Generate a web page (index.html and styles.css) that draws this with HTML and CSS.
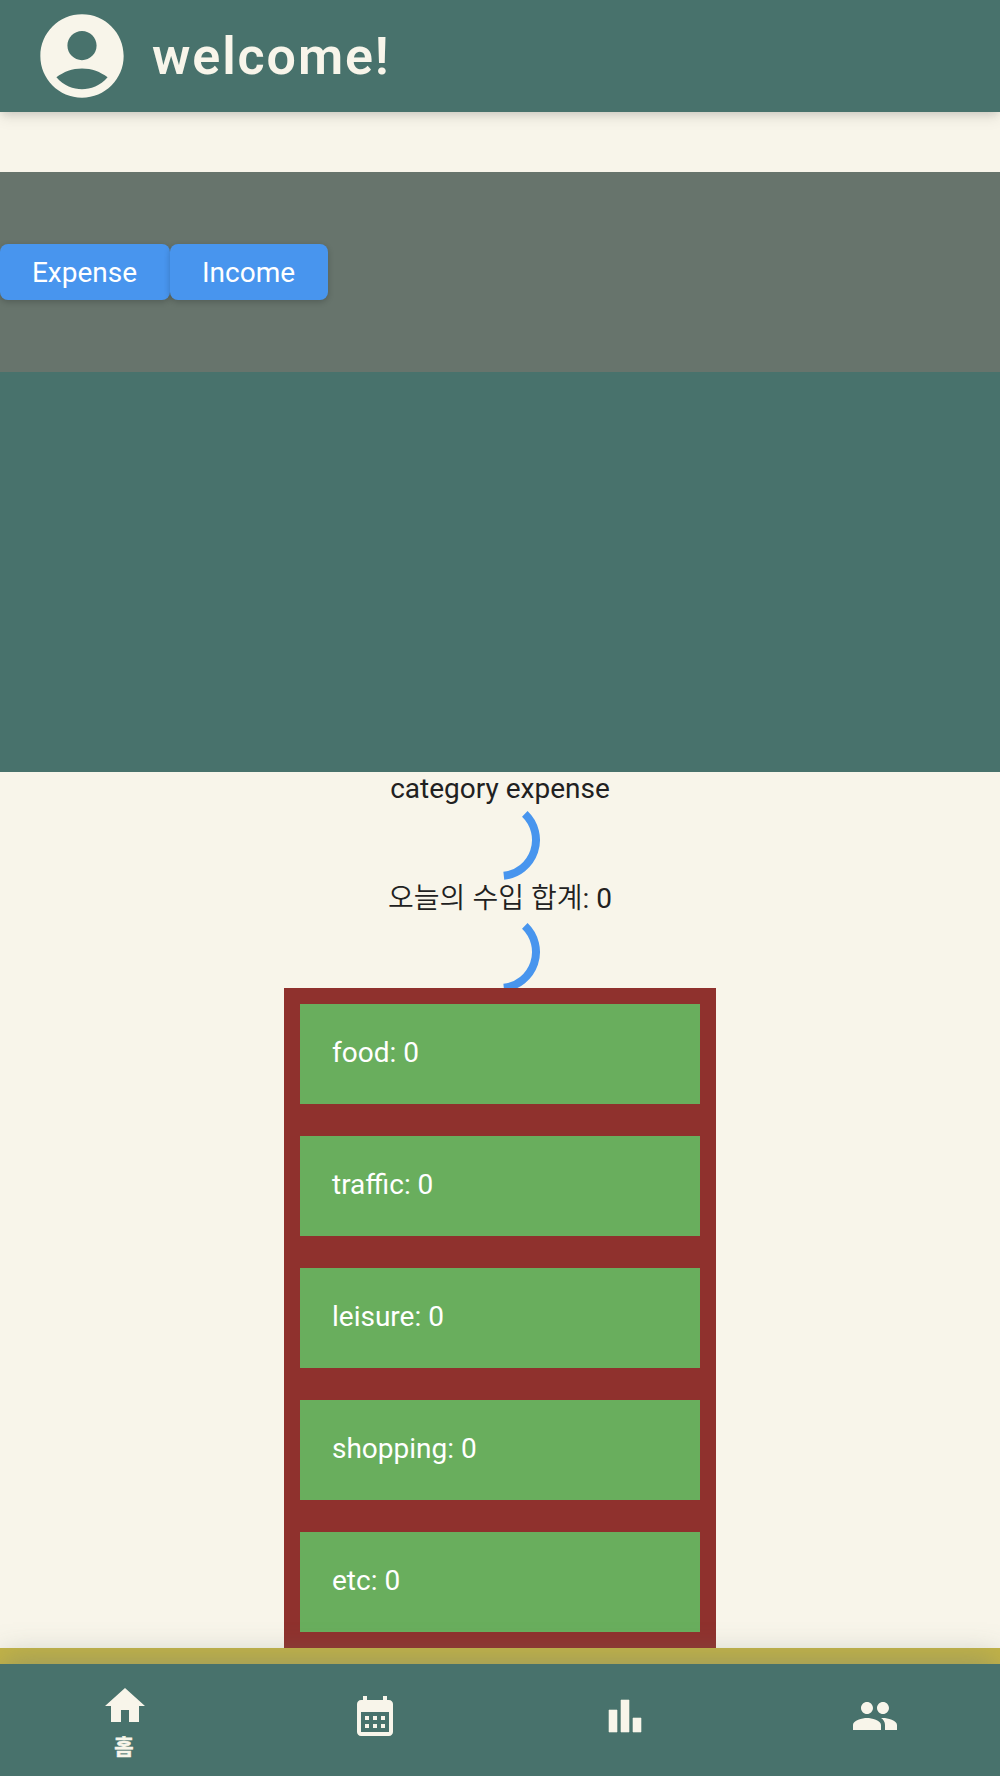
FILE: index.html
```html
<!DOCTYPE html>
<html lang="ko">
<head>
<meta charset="utf-8">
<title>welcome!</title>
<link rel="stylesheet" href="styles.css">
</head>
<body>
<div class="app">
  <header class="app-bar">
    <svg class="avatar" viewBox="0 0 24 24"><path fill-rule="evenodd" d="M12 2C6.48 2 2 6.48 2 12s4.48 10 10 10 10-4.48 10-10S17.52 2 12 2zM12 6c1.93 0 3.5 1.57 3.5 3.5S13.93 13 12 13s-3.5-1.57-3.5-3.5S10.07 6 12 6zM12 20c-2.03 0-4.43-.82-6.14-2.88C7.55 15.8 9.68 15 12 15s4.45.8 6.14 2.12C16.43 19.18 14.03 20 12 20z"/></svg>
    <h1 class="title">welcome!</h1>
  </header>
  <main class="content">
    <section class="actions">
      <button class="button button-expense">Expense</button>
      <button class="button button-income">Income</button>
    </section>
    <section class="panel"></section>
    <section class="summary">
      <p class="label">category expense</p>
      <svg class="spinner" viewBox="-36 -36 72 72"><path d="M24.8 -26.1A36 36 0 0 1 3.8 35.8"/></svg>
      <p class="label label-korean"><span class="light">오늘의 수입 합계</span>: 0</p>
      <svg class="spinner" viewBox="-36 -36 72 72"><path d="M24.8 -26.1A36 36 0 0 1 3.8 35.8"/></svg>
    </section>
    <ul class="categories">
      <li class="category">food: 0</li>
      <li class="category">traffic: 0</li>
      <li class="category">leisure: 0</li>
      <li class="category">shopping: 0</li>
      <li class="category">etc: 0</li>
    </ul>
    <div class="strip"></div>
  </main>
  <nav class="bottom-nav">
    <a class="nav-item nav-active">
      <svg class="icon" viewBox="0 0 24 24"><path d="M10 20v-6h4v6h5v-8h3L12 3 2 12h3v8z"/></svg>
      <span class="nav-label">홈</span>
    </a>
    <a class="nav-item">
      <svg class="icon" viewBox="0 0 24 24"><path d="M19 4h-1V2h-2v2H8V2H6v2H5c-1.11 0-1.99.9-1.99 2L3 20c0 1.1.89 2 2 2h14c1.1 0 2-.9 2-2V6c0-1.1-.9-2-2-2zm0 16H5V10h14v10zM9 14H7v-2h2v2zm4 0h-2v-2h2v2zm4 0h-2v-2h2v2zm-8 4H7v-2h2v2zm4 0h-2v-2h2v2zm4 0h-2v-2h2v2z"/></svg>
    </a>
    <a class="nav-item">
      <svg class="icon icon-chart" viewBox="0 0 24 24"><path d="M4 9h4v11H4zM16 13h4v7h-4zM10 4h4v16h-4z"/></svg>
    </a>
    <a class="nav-item">
      <svg class="icon" viewBox="0 0 24 24"><path d="M16 11c1.66 0 2.99-1.34 2.99-3S17.66 5 16 5s-3 1.34-3 3 1.34 3 3 3zm-8 0c1.66 0 2.99-1.34 2.99-3S9.66 5 8 5 5 6.34 5 8s1.34 3 3 3zm0 2c-2.33 0-7 1.17-7 3.5V19h14v-2.5c0-2.33-4.67-3.5-7-3.5zm8 0c-.29 0-.62.02-.97.05 1.16.84 1.97 1.97 1.97 3.45V19h6v-2.5c0-2.33-4.67-3.5-7-3.5z"/></svg>
    </a>
  </nav>
</div>
</body>
</html>
```
FILE: styles.css
```css
* {
  box-sizing: border-box;
}

body {
  margin: 0;
  background: #f8f5ea;
  color: #212121;
  font-family: Roboto, "Noto Sans CJK KR", sans-serif;
  font-size: 28px;
}

.app {
  display: flex;
  flex-direction: column;
  height: 1776px;
  overflow: hidden;
}

.app-bar {
  display: flex;
  flex: none;
  align-items: center;
  gap: 20px;
  height: 112px;
  padding-left: 32px;
  background: #48726c;
  color: #f8f5ea;
  box-shadow: 0 4px 8px -2px rgba(0, 0, 0, .12), 0 6px 14px rgba(0, 0, 0, .08);
  z-index: 1;
}

.avatar {
  width: 100px;
  height: 100px;
  fill: currentColor;
}

.title {
  margin: 0;
  padding-top: 2px;
  font-size: 52px;
  font-weight: 600;
  letter-spacing: 1.9px;
  line-height: 60px;
}

.content {
  flex: 1;
  padding-top: 60px;
}

.actions {
  display: flex;
  align-items: center;
  height: 200px;
  background: #67746c;
}

.button {
  height: 56px;
  padding: 0 1px 0 0;
  border: 0;
  border-radius: 8px;
  background: #4895ee;
  color: #fff;
  font: inherit;
  box-shadow: 0 2px 6px rgba(0, 0, 0, .2);
}

.button-expense {
  width: 170px;
}

.button-income {
  width: 158px;
}

.panel {
  height: 400px;
  background: #48726c;
}

.summary {
  display: flex;
  flex-direction: column;
  align-items: center;
  height: 216px;
}

.label {
  height: 32px;
  margin: 0;
  line-height: 34px;
}

.label-korean {
  height: 40px;
  line-height: 45px;
}

.light {
  font-family: "Noto Sans CJK KR", sans-serif;
  font-weight: 350;
  line-height: 1;
  word-spacing: -.8px;
}

.spinner {
  flex: none;
  width: 72px;
  height: 72px;
  overflow: visible;
  fill: none;
  stroke: #4895ee;
  stroke-width: 8;
}

.categories {
  position: relative;
  display: flex;
  flex-direction: column;
  gap: 32px;
  width: 432px;
  margin: 0 auto;
  padding: 16px;
  background: #8f312d;
  list-style: none;
}

.category {
  height: 100px;
  padding: 32px;
  background: #69ae5d;
  color: #fff;
  line-height: 33px;
}

.strip {
  height: 16px;
  background: #c4b445;
}

.bottom-nav {
  display: flex;
  flex: none;
  height: 112px;
  background: #48726c;
  color: #f8f5ea;
  box-shadow: 0 -8px 30px -2px rgba(110, 125, 120, .45);
  z-index: 1;
}

.nav-item {
  display: flex;
  flex: 1;
  flex-direction: column;
  align-items: center;
  padding-top: 28px;
}

.nav-active {
  padding-top: 18px;
}

.icon {
  width: 48px;
  height: 48px;
  fill: currentColor;
}

.icon-chart {
  stroke: currentColor;
  stroke-width: .3;
}

.nav-label {
  padding-right: 2px;
  font-size: 21px;
  font-weight: 700;
  line-height: 34px;
  -webkit-text-stroke: .6px;
}
```
